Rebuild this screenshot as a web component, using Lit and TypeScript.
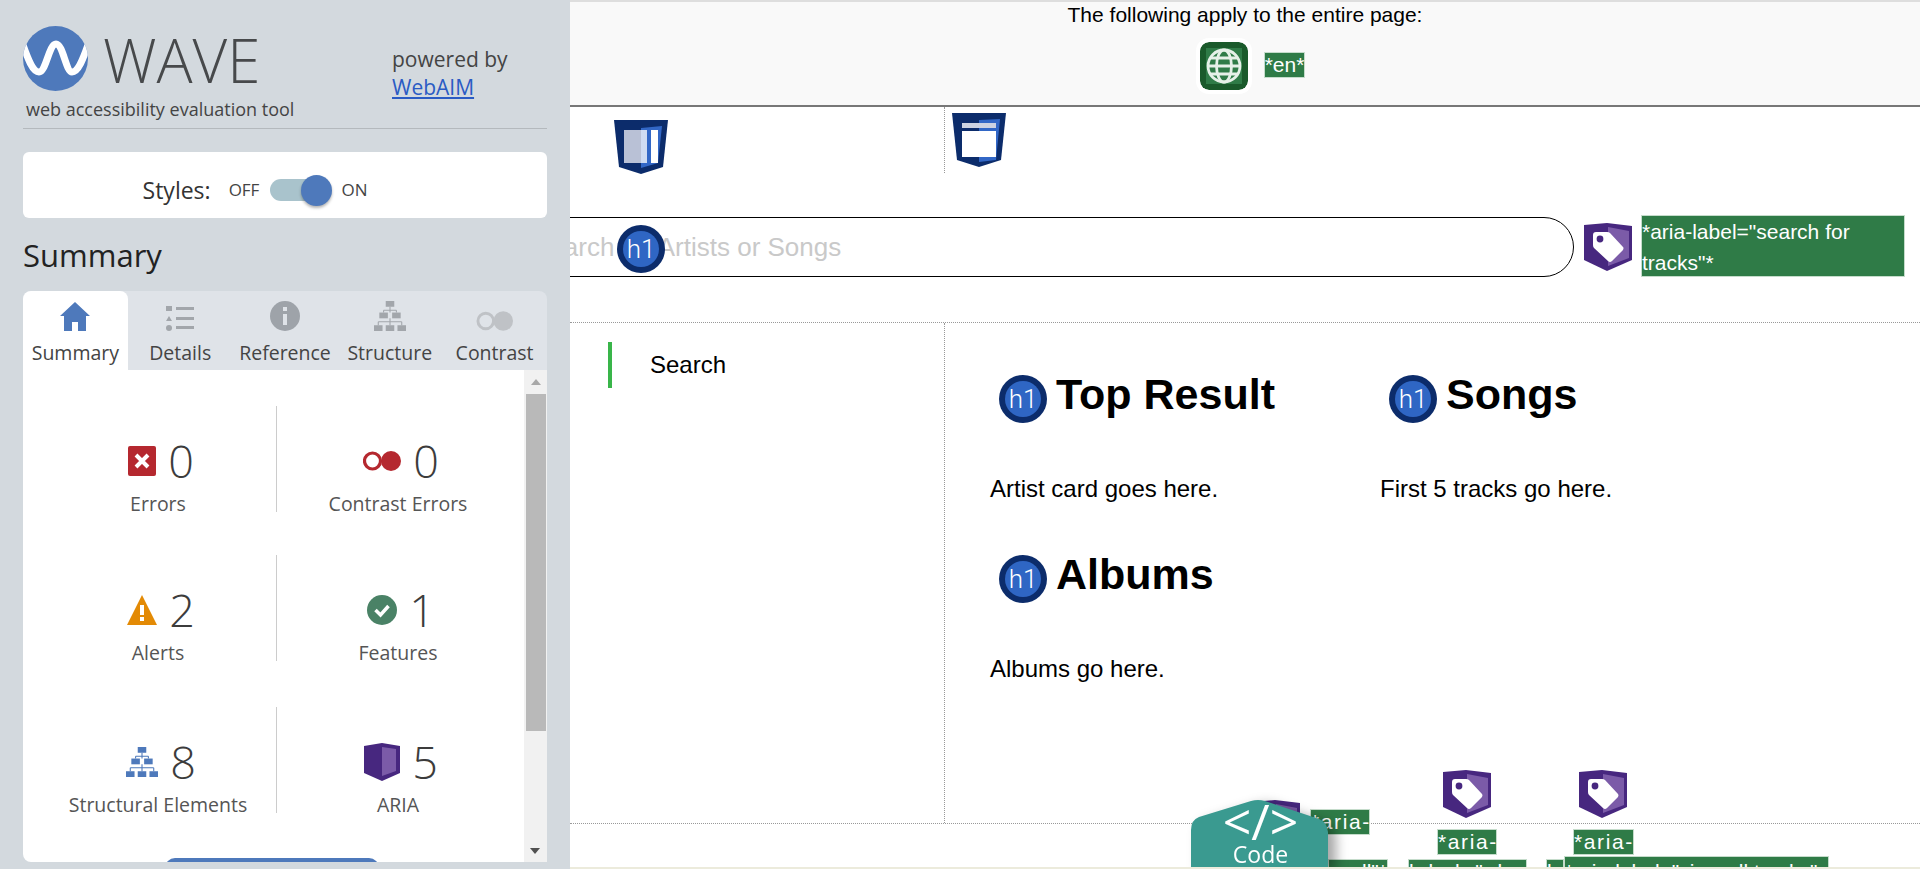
import { LitElement, html, css, svg } from "lit";
import { customElement } from "lit/decorators.js";

const h1Icon = (cls = "") => html`<svg class="h1 ${cls}" viewBox="0 0 48 48" aria-hidden="true"><circle cx="24" cy="24" r="24" fill="#0c2c6b"/><circle cx="24" cy="24" r="18" fill="#2f66c4"/><text x="24" y="33" text-anchor="middle" font-family="Roboto, sans-serif" font-weight="300" font-size="26" fill="#fff">h1</text></svg>`;
const tagIcon = (cls = "") => html`<svg class="tag ${cls}" viewBox="0 0 48 48" aria-hidden="true"><path d="M0 2 23 0l25 3v34L23 48 0 37z" fill="#47277f"/><path d="M24 4l21 4v27l-21 8z" fill="#7b5ba8"/><path d="M9 12q0-3 3-3h11q2 0 3 1l13 14q1 1 0 3L28 38q-2 2-4 0L10 25q-1-1-1-3z" fill="#fff"/><circle cx="16" cy="16" r="3.400" fill="#47277f"/></svg>`;
const structIcon = (c: string) => svg`<g fill="${c}"><rect x="11" y="0" width="8" height="5"/><rect x="5" y="10" width="8" height="5"/><rect x="17" y="10" width="8" height="5"/><rect x="0" y="21" width="8" height="5"/><rect x="11" y="21" width="8" height="5"/><rect x="22" y="21" width="8" height="5"/><path d="M14.500 5h1v5h-1zM9 7.500h12v1H9zM8.500 8h1v2h-1zM20.500 8h1v2h-1zM14.500 15h1v6h-1zM4 17.500h22v1H4zM3.500 18h1v3h-1zM25.500 18h1v3h-1z"/></g>`;

const overlayTags = [
  { x: 1252, y: 800 },
  { x: 1443, y: 770 },
  { x: 1579, y: 770 },
];
const overlayLabels = [
  { x: 1310, y: 809, w: 60, t: "*aria-", cls: "sp" },
  { x: 1328, y: 859, w: 60, t: 'small"*', cls: "end" },
  { x: 1437, y: 829, w: 60, t: "*aria-", cls: "sp" },
  { x: 1408, y: 859, w: 119, t: 'label="play', cls: "sp" },
  { x: 1573, y: 829, w: 61, t: "*aria-", cls: "sp" },
  { x: 1546, y: 859, w: 18, t: "l", cls: "" },
  { x: 1564, y: 856, w: 265, t: '*aria-label="view all tracks"', cls: "low" },
];

@customElement("app-root")
export class AppRoot extends LitElement {
  static styles = css`
    :host { display: block; width: 1920px; height: 869px; overflow: hidden; position: relative; background: #fff; font-family: "Liberation Sans", Arial, sans-serif; color: #000; }
    .page { display: flex; height: 869px; }

    /* sidebar */
    .side { width: 570px; flex: none; height: 869px; box-sizing: border-box; padding-left: 23px; background: #d3d9de; font-family: "Open Sans", sans-serif; color: #444; overflow: hidden; position: relative; z-index: 1; }
    .brand { display: flex; height: 128px; border-bottom: 1px solid #b4b9bd; width: 524px; }
    .logoCol { width: 369px; flex: none; }
    .logoRow { display: flex; align-items: center; padding-top: 26px; height: 65px; gap: 15px; }
    .logo { width: 65px; height: 65px; flex: none; }
    .wave { font-size: 60px; font-weight: 300; line-height: 65px; color: #47494b; padding-top: 4px; }
    .tool { font-size: 18px; line-height: 24px; margin: 6px 0 0 3px; color: #444; white-space: nowrap; }
    .powered { font-size: 21px; line-height: 28px; padding-top: 45px; color: #444; white-space: nowrap; }
    .powered a { color: #2a5bc4; display: block; text-decoration: underline; }
    .styles { margin-top: 23px; width: 524px; height: 66px; border-radius: 6px; background: #fff; display: flex; align-items: center; justify-content: center; gap: 18px; box-sizing: border-box; padding: 9px 60px 0 0; }
    .styles .lab { font-size: 23px; color: #333; }
    .tog { display: flex; align-items: center; gap: 11px; font-size: 17px; color: #444; }
    .track { width: 60px; height: 22px; border-radius: 11px; background: #a9c3cc; position: relative; }
    .knob { position: absolute; right: -2px; top: -4px; width: 31px; height: 31px; border-radius: 50%; background: #4e79bb; box-shadow: 0 2px 3px rgba(0,0,0,.3); }
    .sumh { font-size: 31px; font-weight: 400; margin: 0; line-height: 40px; padding-top: 17px; color: #222; }
    .tabs { margin-top: 16px; width: 524px; height: 79px; display: flex; background: #dfe3e8; border-radius: 8px 8px 0 0; }
    .t { flex: 1; display: flex; flex-direction: column; align-items: center; font-size: 19.500px; color: #444; height: 79px; box-sizing: border-box; }
    .t .ic { height: 50px; display: flex; align-items: flex-end; padding-bottom: 10px; box-sizing: border-box; }
    .t.on { background: #fff; border-radius: 8px 8px 0 0; }
    .t span { line-height: 24px; white-space: nowrap; }
    .panel { width: 524px; height: 492px; background: #fff; display: flex; border-radius: 0 0 0 8px; overflow: hidden; }
    .body { width: 501px; flex: none; position: relative; }
    .grid { display: grid; grid-template-columns: 236px 243px; padding: 36px 0 0 17px; }
    .cell { height: 106px; margin-bottom: 43px; display: flex; flex-direction: column; align-items: center; }
    .cell.r { border-left: 1px solid #ccc; }
    .cell.c3 { margin-bottom: 0; margin-top: 3px; }
    .top { flex: none; display: flex; align-items: center; gap: 12px; height: 68px; padding: 40px 0 0 6px; box-sizing: content-box; margin-top: -19px; }
    .num { font-size: 45px; font-weight: 300; line-height: 56px; color: #3c3c3c; }
    .lbl { flex: none; font-size: 19.500px; line-height: 24px; color: #555; margin-top: -3px; white-space: nowrap; }
    .btn { position: absolute; left: 142px; top: 488px; width: 214px; height: 30px; background: #4e79bb; border-radius: 10px 10px 0 0; }
    .bar { width: 23px; background: #f1f1f1; flex: none; position: relative; display: flex; flex-direction: column; align-items: center; }
    .up { width: 0; height: 0; border: 5px solid transparent; border-top: 0; border-bottom: 6px solid #a8a8a8; margin-top: 9px; }
    .thumb { width: 20px; height: 337px; background: #b9b9b9; margin-top: 9px; }
    .dn { position: absolute; bottom: 8px; left: 6px; width: 0; height: 0; border: 5px solid transparent; border-bottom: 0; border-top: 6px solid #505050; }

    /* main */
    .main { flex: 1; min-width: 0; display: flex; flex-direction: column; height: 869px; }
    .applies { height: 107px; flex: none; box-sizing: border-box; background: #f9f9f9; border-top: 2px solid #dedede; border-bottom: 2px solid #777; display: flex; flex-direction: column; align-items: center; }
    .applies p { margin: 0; font-size: 21px; line-height: 26px; }
    .enRow { display: flex; align-items: center; gap: 16px; margin-top: 14px; padding-left: 15px; }
    .globe { width: 48px; height: 48px; border-radius: 9px; box-shadow: 0 0 0 4px #fff; }
    .lab-g { background: #2f7b47; color: #fff; border: 1px solid #c5dccb; box-sizing: border-box; font-size: 21px; line-height: 24px; }
    .lab-g.en { height: 26px; margin-top: -2px; }

    .top-row { height: 110px; flex: none; display: flex; }
    .tr1 { width: 374px; flex: none; padding: 13px 0 0 44px; box-sizing: border-box; }
    .tr2 { flex: 1; }
    .tr2 .inner { border-left: 1px dotted #999; height: 66px; padding: 6px 0 0 7px; box-sizing: border-box; }
    .shield { width: 54px; height: 54px; display: block; }

    .search-row { height: 106px; flex: none; display: flex; box-sizing: border-box; border-bottom: 1px dotted #999; position: relative; }
    .input { margin-left: -50px; width: 1054px; height: 60px; box-sizing: border-box; border: 1px solid #000; border-radius: 30px; display: flex; align-items: center; padding-left: 11px; color: #c9c9c9; font-size: 26px; white-space: nowrap; overflow: hidden; flex: none; }
    .h1 { width: 48px; height: 48px; flex: none; display: block; }
    .search-h1 { position: absolute; left: 47px; top: 8px; }
    .search-tag { margin: 6px 0 0 10px; }
    .tag { width: 48px; height: 48px; flex: none; display: block; }
    .aria { width: 264px; height: 62px; margin: -2px 0 0 9px; padding: 0; line-height: 31px; flex: none; }

    .content { flex: none; display: flex; border-bottom: 1px dotted #999; height: 501px; box-sizing: border-box; }
    .nav { width: 374px; flex: none; padding: 19px 0 0 38px; box-sizing: border-box; }
    .nav div { border-left: 4px solid #39b54a; height: 46px; padding-left: 38px; font-size: 24px; line-height: 46px; box-sizing: border-box; }
    .res { flex: 1; border-left: 1px dotted #999; padding: 52px 0 0 45px; box-sizing: border-box; }
    .cols { display: grid; grid-template-columns: 390px 390px; }
    .sec { height: 180px; }
    .sec h2 { margin: 0; height: 48px; display: flex; align-items: flex-start; gap: 9px; padding-left: 9px; font-size: 43px; line-height: 39px; font-weight: 700; }
    .sec p { margin: 0; padding-top: 52px; font-size: 24px; line-height: 28px; white-space: nowrap; }

    .float { position: absolute; }
    .lab-b { position: absolute; height: 26px; white-space: nowrap; overflow: hidden; }
    .lab-b.sp { letter-spacing: 1.600px; }
    .lab-b.end { display: flex; justify-content: flex-end; }
    .lab-b.low { height: 20px; padding-top: 3px; }
    .code { position: absolute; left: 1191px; top: 800px; width: 137px; height: 67px; filter: drop-shadow(8px 4px 6px rgba(0,0,0,.35)); }
    .code svg { position: absolute; left: 0; top: 0; width: 137px; height: 67px; display: block; }
    .code .sym { position: absolute; left: 0; right: 0; top: -7px; text-align: center; color: #fff; font: 400 50px/56px "Open Sans", sans-serif; padding-left: 2px; }
    .code .txt { position: absolute; left: 0; right: 0; top: 39px; text-align: center; color: #fff; font: 23px/30px "Open Sans", sans-serif; padding-left: 2px; }
    .strip { position: absolute; left: 570px; right: 0; bottom: 0; height: 2px; background: #ecebdc; }
  `;

  private cell(icon: unknown, n: string, label: string, right: boolean, last: boolean) {
    return html`<div class="cell ${right ? "r" : ""} ${last ? "c3" : ""}"><div class="top">${icon}<div class="num">${n}</div></div><div class="lbl">${label}</div></div>`;
  }

  render() {
    const err = html`<svg width="28" height="30" viewBox="0 0 28 30"><rect width="28" height="30" rx="2" fill="#b5282f"/><path d="M8 9l12 12M20 9L8 21" stroke="#fff" stroke-width="4"/></svg>`;
    const con = html`<svg width="38" height="20" viewBox="0 0 38 20"><circle cx="9.500" cy="10" r="8" fill="none" stroke="#b5282f" stroke-width="3.200"/><circle cx="28" cy="10" r="10" fill="#b5282f"/></svg>`;
    const alert = html`<svg width="30" height="30" viewBox="0 0 30 30"><path d="M15 0l15 30H0z" fill="#e38a05"/><rect x="13" y="10" width="4" height="10" fill="#fff"/><rect x="13" y="22" width="4" height="4" fill="#fff"/></svg>`;
    const feat = html`<svg width="30" height="30" viewBox="0 0 30 30"><circle cx="15" cy="15" r="15" fill="#4a8266"/><path d="M8.500 15l5 5 8-9" fill="none" stroke="#fff" stroke-width="3.500"/></svg>`;
    const aria = html`<svg width="36" height="38" viewBox="0 0 36 38"><path d="M0 3l18-3 18 3v27l-18 8-18-8z" fill="#47277f"/><path d="M18 4l14 2v22l-14 5z" fill="#7b5ba8"/></svg>`;
    return html`
      <div class="page">
        <aside class="side">
          <div class="brand">
            <div class="logoCol">
              <div class="logoRow">
                <svg class="logo" viewBox="0 0 65 65"><defs><clipPath id="lc"><circle cx="32.500" cy="32.500" r="32.500"/></clipPath></defs><circle cx="32.500" cy="32.500" r="32.500" fill="#4e79bb"/><path clip-path="url(#lc)" d="M-1 16C4 30 9 46 16 46C23 46 26 18 33 18C40 18 43 46 49 46C56 46 61 30 66 16" fill="none" stroke="#fff" stroke-width="7"/></svg>
                <span class="wave">WAVE</span>
              </div>
              <div class="tool">web accessibility evaluation tool</div>
            </div>
            <div class="powered">powered by<a href="#">WebAIM</a></div>
          </div>
          <div class="styles">
            <span class="lab">Styles:</span>
            <div class="tog"><span>OFF</span><div class="track"><div class="knob"></div></div><span>ON</span></div>
          </div>
          <h2 class="sumh">Summary</h2>
          <div class="tabs">
            <div class="t on"><div class="ic"><svg width="30" height="29" viewBox="0 0 30 29"><path d="M15 0L0 14h4v15h8v-9h6v9h8V14h4z" fill="#4e79bb"/></svg></div><span>Summary</span></div>
            <div class="t"><div class="ic"><svg width="28" height="25" viewBox="0 0 28 25"><g fill="#a2a6ab"><rect x="0" y="0" width="6" height="5"/><path d="M3 10l3 5H0z"/><circle cx="3" cy="22" r="3"/><rect x="10" y="1" width="18" height="3"/><rect x="10" y="11" width="18" height="3"/><rect x="10" y="20" width="18" height="3"/></g></svg></div><span>Details</span></div>
            <div class="t"><div class="ic"><svg width="30" height="30" viewBox="0 0 30 30"><circle cx="15" cy="15" r="15" fill="#9ea3a9"/><rect x="13" y="6" width="4" height="4" fill="#dfe3e8"/><rect x="13" y="13" width="4" height="11" fill="#dfe3e8"/></svg></div><span>Reference</span></div>
            <div class="t"><div class="ic"><svg width="32" height="30" viewBox="0 0 30 26" preserveAspectRatio="none">${structIcon("#a2a6ab")}</svg></div><span>Structure</span></div>
            <div class="t"><div class="ic"><svg width="37" height="20" viewBox="0 0 38 20"><circle cx="10" cy="10" r="8" fill="none" stroke="#bfc2c6" stroke-width="3"/><circle cx="28" cy="10" r="10" fill="#bfc2c6"/></svg></div><span>Contrast</span></div>
          </div>
          <div class="panel">
            <div class="body">
              <div class="grid">
                ${this.cell(err, "0", "Errors", false, false)}
                ${this.cell(con, "0", "Contrast Errors", true, false)}
                ${this.cell(alert, "2", "Alerts", false, false)}
                ${this.cell(feat, "1", "Features", true, false)}
                ${this.cell(html`<svg width="32" height="30" viewBox="0 0 30 26" preserveAspectRatio="none">${structIcon("#4e79bb")}</svg>`, "8", "Structural Elements", false, true)}
                ${this.cell(aria, "5", "ARIA", true, true)}
              </div>
              <div class="btn"></div>
            </div>
            <div class="bar"><div class="up"></div><div class="thumb"></div><div class="dn"></div></div>
          </div>
        </aside>
        <main class="main">
          <div class="applies">
            <p>The following apply to the entire page:</p>
            <div class="enRow">
              <svg class="globe" viewBox="0 0 48 48"><rect width="48" height="48" rx="9" fill="#1a5a2b"/><rect x="6" y="6" width="36" height="36" fill="#2f7b47"/><g fill="none" stroke="#e6f0e8" stroke-width="2.800"><circle cx="24" cy="24" r="16"/><ellipse cx="24" cy="24" rx="7.500" ry="16"/><path d="M8 24h32M10 16h28M10 32h28"/></g></svg>
              <span class="lab-g en">*en*</span>
            </div>
          </div>
          <div class="top-row">
            <div class="tr1">
              <svg class="shield" viewBox="0 0 54 54"><path d="M0 0h54l-5 47-22 7-22-7z" fill="#0c2c6b"/><path d="M27 8l21-2-4 37-17 5z" fill="#3267c6"/><rect x="10" y="10" width="17" height="33" fill="#b9c1d6"/><rect x="27" y="10" width="6" height="33" fill="#cfdcf2"/><rect x="37" y="10" width="7" height="33" fill="#fff"/></svg>
            </div>
            <div class="tr2"><div class="inner">
              <svg class="shield" viewBox="0 0 54 54"><path d="M0 0h54l-5 47-22 7-22-7z" fill="#0c2c6b"/><path d="M27 7l21-1-4 41-17 2z" fill="#3267c6"/><rect x="10" y="10" width="34" height="5" fill="#cdd3e2"/><rect x="10" y="18" width="34" height="26" fill="#fff"/></svg>
            </div></div>
          </div>
          <div class="search-row">
            <div class="input"><span>Search for Artists or Songs</span></div>
            ${h1Icon("search-h1")}
            ${tagIcon("search-tag")}
            <div class="lab-g aria">*aria-label="search for tracks"*</div>
          </div>
          <div class="content">
            <div class="nav"><div>Search</div></div>
            <div class="res">
              <div class="cols">
                <section class="sec"><h2>${h1Icon()}Top Result</h2><p>Artist card goes here.</p></section>
                <section class="sec"><h2>${h1Icon()}Songs</h2><p>First 5 tracks go here.</p></section>
                <section class="sec"><h2>${h1Icon()}Albums</h2><p>Albums go here.</p></section>
              </div>
            </div>
          </div>
        </main>
      </div>
      ${overlayTags.map((t) => html`<div class="float" style="left:${t.x}px;top:${t.y}px">${tagIcon()}</div>`)}
      ${overlayLabels.map((l) => html`<div class="lab-g lab-b ${l.cls}" style="left:${l.x}px;top:${l.y}px;width:${l.w}px">${l.t}</div>`)}
      <div class="code">
        <svg viewBox="0 0 137 67"><path d="M0 30Q0 20 8 17L60 1Q67-1 74 1L128 19Q136 22 137 32V67H0z" fill="#3a9a90"/></svg>
        <div class="sym">&lt;/&gt;</div>
        <div class="txt">Code</div>
      </div>
      <div class="strip"></div>
    `;
  }
}
